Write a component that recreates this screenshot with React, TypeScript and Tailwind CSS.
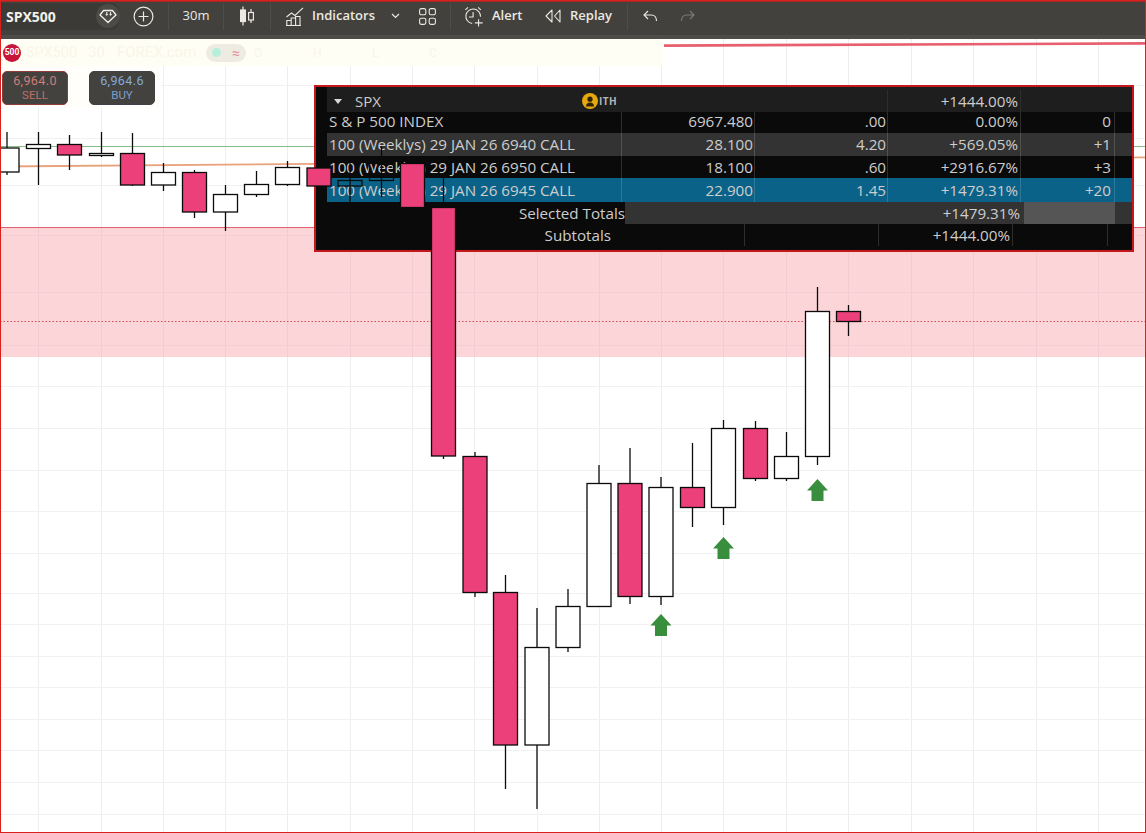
import React from "react";

type Candle = { x: number; top: number; bottom: number; high: number; low: number; red?: boolean; clear?: boolean };

const candles: Candle[] = [
  { x: 7, top: 148, bottom: 172, high: 132, low: 175 },
  { x: 38.5, top: 144.5, bottom: 148.5, high: 132, low: 185 },
  { x: 69.5, top: 144.5, bottom: 155, high: 135, low: 170, red: true },
  { x: 101.5, top: 153.5, bottom: 155.5, high: 132, low: 157 },
  { x: 132.5, top: 153.5, bottom: 185, high: 133, low: 186, red: true },
  { x: 163.5, top: 172.5, bottom: 185, high: 163, low: 191 },
  { x: 194.5, top: 172.5, bottom: 212, high: 170, low: 218, red: true },
  { x: 225.5, top: 194.5, bottom: 212, high: 185, low: 231 },
  { x: 256.5, top: 184.5, bottom: 194.5, high: 171, low: 197 },
  { x: 287.5, top: 167.5, bottom: 184.5, high: 161, low: 186 },
  { x: 319, top: 168, bottom: 186, high: 160, low: 213, red: true },
  { x: 350, top: 180.5, bottom: 186, high: 163, low: 207, clear: true },
  { x: 381.5, top: 163.5, bottom: 180.5, high: 146, low: 197, clear: true },
  { x: 412.5, top: 163.5, bottom: 207.5, high: 163, low: 216, red: true },
  { x: 443.5, top: 207.5, bottom: 456, high: 177, low: 459, red: true },
  { x: 475, top: 456.5, bottom: 592.5, high: 452, low: 597, red: true },
  { x: 505.5, top: 592.5, bottom: 745, high: 575, low: 789, red: true },
  { x: 537, top: 647.5, bottom: 745, high: 608, low: 809 },
  { x: 568, top: 606.5, bottom: 647.5, high: 589, low: 652 },
  { x: 599, top: 483.5, bottom: 606.5, high: 465, low: 607 },
  { x: 630, top: 483.5, bottom: 596.5, high: 448, low: 604, red: true },
  { x: 661, top: 487.5, bottom: 596.5, high: 477, low: 605 },
  { x: 692.5, top: 487.5, bottom: 507.5, high: 443, low: 527, red: true },
  { x: 723.5, top: 428.5, bottom: 507.5, high: 420, low: 525 },
  { x: 755.5, top: 428.5, bottom: 478.5, high: 421, low: 481, red: true },
  { x: 786.5, top: 456.5, bottom: 478.5, high: 432, low: 481 },
  { x: 817.5, top: 311.5, bottom: 456.5, high: 287, low: 465 },
  { x: 848.5, top: 311.5, bottom: 321.5, high: 305, low: 336, red: true },
];

const gridX = [38, 101, 163, 225, 287, 350, 412, 474, 537, 599, 661, 723, 786, 848, 911, 973, 1036, 1098];
const gridY = [85, 138, 185, 235, 292, 345, 386, 428, 470, 511, 553, 593, 624, 656, 687, 719, 750, 782, 814];
const arrows = [
  { x: 661, y: 614 },
  { x: 723.5, y: 537 },
  { x: 817.5, y: 479 },
];

const Sep = ({ className = "" }: { className?: string }) => (
  <div className={`w-px h-[27px] bg-[#4e4d49] shrink-0 ${className}`} />
);

const ChartBack = () => (
  <svg className="absolute inset-0" width="1144" height="793" viewBox="1 39 1144 793">
    {gridX.map((x) => (
      <line key={x} x1={x + 0.5} x2={x + 0.5} y1="39" y2="833" stroke="#eeeef0" />
    ))}
    {gridY.map((y) => (
      <line key={y} x1="0" x2="1146" y1={y + 0.5} y2={y + 0.5} stroke="#f1f1f3" />
    ))}
    <rect x="0" y="227" width="1146" height="130" fill="#f9a8b0" fillOpacity="0.48" />
    <line x1="0" x2="1146" y1="227.5" y2="227.5" stroke="#e2606c" />
    <line x1="0" x2="1146" y1="321.5" y2="321.5" stroke="#d04a5a" strokeDasharray="1.5 2" />
    <line x1="0" x2="1146" y1="146.5" y2="146.5" stroke="#86bd86" />
    <line x1="0" x2="1146" y1="166.5" y2="157.3" stroke="#e9a37c" strokeWidth="1.8" />
    <line x1="664" x2="1146" y1="45.6" y2="43.4" stroke="#e8606f" strokeWidth="2.6" />
  </svg>
);

const ChartFront = () => (
  <svg className="absolute inset-0 pointer-events-none" width="1144" height="793" viewBox="1 39 1144 793">
    {candles.map((c) => (
      <g key={c.x}>
        <line x1={c.x} x2={c.x} y1={c.high} y2={c.low} stroke="#0b0b0b" strokeWidth="1.3" />
        <rect
          x={c.x - 12}
          y={c.top}
          width="24"
          height={c.bottom - c.top}
          fill={c.red ? "#ec407a" : c.clear ? "none" : "#ffffff"}
          stroke="#0b0b0b"
          strokeWidth="1.3"
        />
      </g>
    ))}
    {arrows.map((a) => (
      <polygon
        key={a.x}
        points={`${a.x},${a.y} ${a.x + 10.5},${a.y + 11.5} ${a.x + 6},${a.y + 11.5} ${a.x + 6},${a.y + 22} ${a.x - 6},${a.y + 22} ${a.x - 6},${a.y + 11.5} ${a.x - 10.5},${a.y + 11.5}`}
        fill="#388e3c"
      />
    ))}
  </svg>
);

const Toolbar = () => (
  <div className="flex items-center h-[38px] shrink-0 bg-[#42413d] border-t border-[#a82824] border-b-4 border-b-[#4d4c48] pb-[5px] text-[#ebe9e2] text-[13px] font-semibold">
    <div className="flex items-center w-[118px] h-[27px] pl-[5px] justify-between bg-[#3b3a37] rounded-r-lg">
      <span className="text-[14px] font-bold text-[#f3f1ea]">SPX500</span>
      <div className="flex items-center justify-center w-[24px] h-[24px] rounded-full bg-[#4c4b47] mr-[-1px]">
        <svg width="18" height="15" viewBox="0 0 18 15" fill="none" stroke="#f3f1ea" strokeWidth="1.3">
          <path d="M4.5 1.5h9l3.5 4.5-8 7.5-8-7.5z" strokeLinejoin="round" />
          <path d="M4.8 5.5h2.8L6.2 7.5zM8.6 5.5h2.8L10 7.5z" transform="translate(1.6 -0.6)" fill="#f3f1ea" stroke="none" />
          <path d="M7.3 3h1v2.6h-1zM11.1 3h1v2.6h-1z" fill="#f3f1ea" stroke="none" />
        </svg>
      </div>
    </div>
    <div className="flex items-center justify-center w-[49px]">
      <svg width="21" height="21" viewBox="0 0 21 21" fill="none" stroke="#ebe9e2" strokeWidth="1.2">
        <circle cx="10.5" cy="10.5" r="9.4" />
        <path d="M10.5 5.5v10M5.5 10.5h10" />
      </svg>
    </div>
    <Sep />
    <div className="w-[54px] text-center font-medium">30m</div>
    <Sep />
    <div className="flex items-center justify-center w-[46px]">
      <svg width="16" height="20" viewBox="0 0 16 20" fill="none" stroke="#ebe9e2" strokeWidth="1.2">
        <path d="M4 0.5v19M12 3v14" />
        <rect x="1.6" y="4" width="4.8" height="11.5" fill="#ebe9e2" />
        <rect x="9.6" y="6.5" width="4.8" height="7.5" fill="#42413d" />
      </svg>
    </div>
    <Sep />
    <svg className="ml-[15px]" width="18" height="19" viewBox="0 0 18 19" fill="none" stroke="#ebe9e2" strokeWidth="1.1">
      <path d="M0.5 10l5-4 3.5 2.5L17 0.8" />
      <path d="M0.8 18.5v-5h4.4v5M5.2 18.5v-7.5h4.4v7.5M9.6 18.5v-9h4.4v9" />
      <path d="M0 18.5h15" />
    </svg>
    <span className="ml-[8px] w-[62px] whitespace-nowrap">Indicators</span>
    <svg className="ml-[17px]" width="9" height="6" viewBox="0 0 9 6" fill="none" stroke="#ebe9e2" strokeWidth="1.2">
      <path d="M1 1l3.5 3.5L8 1" />
    </svg>
    <svg className="ml-[19px]" width="17" height="17" viewBox="0 0 17 17" fill="none" stroke="#ebe9e2" strokeWidth="1.1">
      <rect x="0.6" y="0.6" width="6.2" height="6.2" rx="1.6" />
      <rect x="10.2" y="0.6" width="6.2" height="6.2" rx="1.6" />
      <rect x="0.6" y="10.2" width="6.2" height="6.2" rx="1.6" />
      <rect x="10.2" y="10.2" width="6.2" height="6.2" rx="1.6" />
    </svg>
    <Sep className="ml-[14px]" />
    <svg className="ml-[13px] mt-[1px]" width="20" height="21" viewBox="0 0 21 23" fill="none" stroke="#ebe9e2" strokeWidth="1.2">
      <path d="M8.5 19.2A8 8 0 1 1 17.6 11.8" />
      <path d="M9.5 6.5v5.5H5" />
      <path d="M1 4.3L4 1.6M15 1.6l3 2.7" />
      <path d="M15.5 14.5v8M11.5 18.5h8.5" />
    </svg>
    <span className="ml-[8px] w-[31px]">Alert</span>
    <svg className="ml-[22px]" width="16" height="14" viewBox="0 0 16 14" fill="none" stroke="#ebe9e2" strokeWidth="1.1">
      <path d="M7 1L1 7l6 6zM15 1L9.5 7l5.5 6z" strokeLinejoin="round" />
    </svg>
    <span className="ml-[9px] w-[42px] whitespace-nowrap">Replay</span>
    <Sep className="ml-[15px]" />
    <svg className="ml-[15px]" width="14" height="12" viewBox="0 0 14 12" fill="none" stroke="#ebe9e2" strokeWidth="1.1">
      <path d="M5 1L1 5l4 4M1 5h7.5c3 0 5 2 5 6" />
    </svg>
    <svg className="ml-[24px]" width="14" height="12" viewBox="0 0 14 12" fill="none" stroke="#7d7c78" strokeWidth="1.1">
      <path d="M9 1l4 4-4 4M13 5H5.5c-3 0-5 2-5 6" />
    </svg>
  </div>
);

const Legend = () => (
  <>
    <div className="absolute left-0 top-0 flex items-center w-[662px] h-[27px] bg-[#fffef4] text-[#f9f5e9] text-[14px] font-['Roboto',sans-serif]">
      <div className="ml-[2px] w-[18px] h-[18px] rounded-full bg-[#c8133a] text-white text-[8.5px] font-bold flex items-center justify-center">
        500
      </div>
      <span className="ml-[5px] w-[62px] text-[14.5px]">SPX500</span>
      <span className="w-[29px] text-[15px]">30</span>
      <span className="w-[89px] text-[15px]">FOREX.com</span>
      <div className="flex items-center justify-between w-[40px] h-[18px] px-[6px] rounded-full bg-[#eeebe2]">
        <div className="w-[9px] h-[9px] rounded-full bg-[#b6f0dc]" />
        <span className="text-[#e58f98] leading-none">≈</span>
      </div>
      <span className="ml-[8px] w-[59px] text-[12px]">O</span>
      <span className="w-[59px] text-[12px]">H</span>
      <span className="w-[57px] text-[12px]">L</span>
      <span className="text-[12px]">C</span>
    </div>
    <div className="absolute left-0 top-[27px] flex gap-[21px] w-[160px] h-[42px] pt-[5px] pl-px bg-[#fffefa]">
      <div className="flex flex-col items-center justify-center w-[66px] h-[34px] rounded-[5px] bg-[#43423e] border border-[#8e3a36] text-[#d27c76] leading-[15px] font-['Roboto',sans-serif]">
        <span className="text-[12.5px] tracking-[0.4px]">6,964.0</span>
        <span className="text-[11.5px] text-[#bc706a]">SELL</span>
      </div>
      <div className="flex flex-col items-center justify-center w-[66px] h-[34px] rounded-[5px] bg-[#43423e] border border-[#3e4148] text-[#83abdc] leading-[15px] font-['Roboto',sans-serif]">
        <span className="text-[12.5px] tracking-[0.4px]">6,964.6</span>
        <span className="text-[11.5px] text-[#7b9fcc]">BUY</span>
      </div>
    </div>
  </>
);

const rows = [
  { name: "S & P 500 INDEX", mark: "6967.480", chg: ".00", pct: "0.00%", qty: "0", bg: "bg-[#0a0a0a]", h: "h-[21px]", lift: "pb-[3px]" },
  { name: "100 (Weeklys) 29 JAN 26 6940 CALL", mark: "28.100", chg: "4.20", pct: "+569.05%", qty: "+1", bg: "bg-[#333333]", h: "h-[23px]", lift: "pb-[1px]" },
  { name: "100 (Weeklys) 29 JAN 26 6950 CALL", mark: "18.100", chg: ".60", pct: "+2916.67%", qty: "+3", bg: "bg-[#0a0a0a]", h: "h-[22px]", lift: "" },
  { name: "100 (Weeklys) 29 JAN 26 6945 CALL", mark: "22.900", chg: "1.45", pct: "+1479.31%", qty: "+20", bg: "bg-[#0b6288]", h: "h-[24px]", lift: "" },
];

const cell = "flex items-center justify-end h-full border-r";

const PositionsTable = () => (
  <div className="absolute left-[313px] top-[46px] w-[820px] h-[167px] bg-[#0a0a0a] border-2 border-[#c5181d] pl-[11px] text-[15.2px] leading-[16px] text-[#cdcdcd] font-['Open_Sans',sans-serif] overflow-hidden">
    <div className="grid grid-cols-[295px_133px_133px_133px_94px_1fr] items-center h-[25px] pt-[3px] bg-[#1e1e1e]">
      <div className="flex items-center h-full">
        <svg className="ml-[7px]" width="8" height="5" viewBox="0 0 8 5">
          <path d="M0 0h8L4 5z" fill="#d8d8d8" />
        </svg>
        <span className="ml-[13px] text-[15px] w-[27px]">SPX</span>
        <div className="ml-[200px] w-[16px] h-[16px] rounded-full bg-[#e6a70f] flex items-center justify-center">
          <svg width="10" height="11" viewBox="0 0 10 11" fill="#2c2308">
            <circle cx="5" cy="3.2" r="2.6" />
            <path d="M1 10.5c0-3 1.8-4 4-4s4 1 4 4z" />
          </svg>
        </div>
        <span className="ml-px text-[10px] font-bold text-[#b5b5b5] tracking-[0.5px]">ITH</span>
      </div>
      <div className="h-full" />
      <div className="h-full border-r border-[#2e2e2e]" />
      <div className={`${cell} pr-[2px] border-[#2e2e2e]`}>+1444.00%</div>
      <div className="h-full" />
    </div>
    {rows.map((r) => (
      <div key={r.name} className={`grid grid-cols-[295px_133px_133px_133px_94px_1fr] items-center ${r.h} ${r.bg}`}>
        <div className={`flex items-center h-full pl-[2px] border-r border-[#ffffff26] whitespace-nowrap ${r.lift}`}>{r.name}</div>
        <div className={`${cell} pr-[1px] border-[#ffffff26] ${r.lift}`}>{r.mark}</div>
        <div className={`${cell} pr-[1px] border-[#ffffff26] ${r.lift}`}>{r.chg}</div>
        <div className={`${cell} pr-[2px] border-[#ffffff26] ${r.lift}`}>{r.pct}</div>
        <div className={`${cell} pr-[3px] border-[#ffffff26] ${r.lift}`}>{r.qty}</div>
        <div className="h-full" />
      </div>
    ))}
    <div className="grid grid-cols-[298px_399px_91px_1fr] items-center h-[22px]">
      <div className="flex items-center justify-end h-full whitespace-nowrap">Selected Totals</div>
      <div className="flex items-center justify-end h-full pr-[4px] bg-[#333333]">+1479.31%</div>
      <div className="h-full bg-[#555555]" />
      <div className="h-full bg-[#333333]" />
    </div>
    <div className="grid grid-cols-[284px_134px_134px_134px_95px_1fr] items-center h-[26px] pb-[4px]">
      <div className="text-right whitespace-nowrap">Subtotals</div>
      <div className="h-full border-r border-[#2e2e2e]" />
      <div className="h-full border-r border-[#2e2e2e]" />
      <div className={`${cell} pr-[2px] border-[#2e2e2e]`}>+1444.00%</div>
      <div className="h-full border-r border-[#2e2e2e]" />
      <div className="h-full" />
    </div>
  </div>
);

export default function App() {
  return (
    <div className="flex flex-col w-[1146px] h-[833px] overflow-hidden bg-white border border-[#d8201f] font-['Open_Sans',sans-serif]">
      <Toolbar />
      <div className="relative flex-1">
        <ChartBack />
        <Legend />
        <PositionsTable />
        <ChartFront />
      </div>
    </div>
  );
}
